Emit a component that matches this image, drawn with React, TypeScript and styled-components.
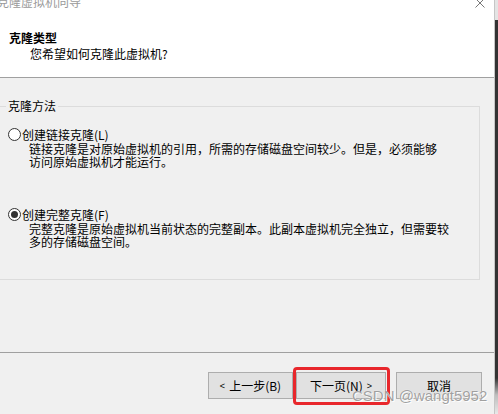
import React from "react";
import styled, { createGlobalStyle } from "styled-components";

const GlobalStyle = createGlobalStyle`
  html, body { margin: 0; padding: 0; background: #fff; }
  body {
    font-family: "Noto Sans CJK SC", "Liberation Sans", sans-serif;
    font-size: 12px;
    color: #000;
  }
`;

const Screen = styled.div`
  width: 498px;
  height: 414px;
  overflow: hidden;
  display: flex;
`;

const Dialog = styled.div`
  width: 494px;
  height: 414px;
  flex: none;
  display: flex;
  flex-direction: column;
  background: #f0f0f0;
`;

const EdgeStrip = styled.div`
  width: 4px;
  flex: none;
  box-sizing: border-box;
  border-left: 1px solid #c6c6c6;
  background: linear-gradient(
    to bottom,
    #e4e4e4 0px,
    #e4e4e4 20px,
    #333 20px,
    #333 378px,
    #bdbdbd 395px,
    #e8e8e8 414px
  );
`;

const Header = styled.div`
  height: 78px;
  box-sizing: border-box;
  background: #fff;
  border-bottom: 1px solid #a0a0a0;
  display: flex;
  flex-direction: column;
`;

const TitleBar = styled.div`
  height: 16px;
  margin: -6px 0 0 -3px;
  padding-right: 9px;
  display: flex;
  align-items: center;
  justify-content: space-between;
`;

const TitleText = styled.span`
  color: #9a9a9a;
  line-height: 16px;
`;

const Heading = styled.div`
  margin: 20px 0 0 9px;
  font-weight: bold;
  line-height: 16px;
`;

const SubHeading = styled.div`
  margin-left: 30px;
  line-height: 16px;
`;

const Body = styled.div`
  flex: 1;
  padding-top: 20px;
`;

const GroupBox = styled.fieldset`
  margin: 0 0 0 -3px;
  width: 483px;
  box-sizing: border-box;
  min-width: 0;
  padding: 12px 0 31px 0;
  border: 1px solid #dcdcdc;
`;

const Legend = styled.legend`
  margin-left: 8px;
  padding: 0 2px;
  line-height: 16px;
`;

const Option = styled.div<{ $gap?: number }>`
  display: flex;
  flex-direction: column;
  margin-top: ${(p) => p.$gap ?? 0}px;
`;

const OptionLabel = styled.label`
  display: flex;
  align-items: center;
  height: 16px;
  padding-left: 10px;
  gap: 1px;
  white-space: nowrap;
`;

const Radio = styled.span<{ $checked?: boolean }>`
  width: 13px;
  height: 13px;
  box-sizing: border-box;
  border-radius: 50%;
  border: 1px solid #333;
  background: #fff;
  display: flex;
  align-items: center;
  justify-content: center;
  &::after {
    content: "";
    width: 7px;
    height: 7px;
    border-radius: 50%;
    background: #333;
    display: ${(p) => (p.$checked ? "block" : "none")};
  }
`;

const Desc = styled.div`
  padding-left: 31px;
  line-height: 13px;
  white-space: nowrap;
`;

const Footer = styled.div`
  height: 62px;
  box-sizing: border-box;
  border-top: 1px solid #a0a0a0;
  position: relative;
  display: flex;
  align-items: flex-start;
  padding: 19px 0 0 208px;
`;

const Button = styled.button<{ $w: number; $ml?: number }>`
  width: ${(p) => p.$w}px;
  height: 27px;
  margin-left: ${(p) => p.$ml ?? 0}px;
  box-sizing: border-box;
  background: #e1e1e1;
  border: 1px solid #adadad;
  font-family: inherit;
  font-size: 12px;
  color: #000;
  padding: 0;
  display: flex;
  align-items: center;
  justify-content: center;
  gap: 4px;
  white-space: nowrap;
`;

const Chevron = styled.span`
  font-size: 9px;
  font-family: "Liberation Sans", sans-serif;
`;

const Highlight = styled.div`
  position: absolute;
  left: 293px;
  top: 14px;
  width: 97px;
  height: 38px;
  box-sizing: border-box;
  border: 3px solid #e8272c;
  border-radius: 4px;
  pointer-events: none;
`;

const Watermark = styled.div`
  position: absolute;
  left: 352px;
  top: 34px;
  font-family: "Liberation Sans", Arial, sans-serif;
  font-size: 15px;
  line-height: 18px;
  color: rgba(130, 130, 130, 0.75);
  text-shadow: 0 0 1px #fff, 1px 1px 0 rgba(255, 255, 255, 0.9);
  white-space: nowrap;
  pointer-events: none;
`;

const CloseIcon = () => (
  <svg width="10" height="10" viewBox="0 0 10 10" style={{ marginTop: 1 }}>
    <path d="M0.5 0.5 L9.5 9.5 M9.5 0.5 L0.5 9.5" stroke="#777" strokeWidth="1" fill="none" />
  </svg>
);

export default function App() {
  return (
    <>
      <GlobalStyle />
      <Screen>
        <Dialog>
          <Header>
            <TitleBar>
              <TitleText>克隆虚拟机向导</TitleText>
              <CloseIcon />
            </TitleBar>
            <Heading>克隆类型</Heading>
            <SubHeading>您希望如何克隆此虚拟机?</SubHeading>
          </Header>
          <Body>
            <GroupBox>
              <Legend>克隆方法</Legend>
              <Option>
                <OptionLabel>
                  <Radio />
                  创建链接克隆(L)
                </OptionLabel>
                <Desc>链接克隆是对原始虚拟机的引用，所需的存储磁盘空间较少。但是，必须能够</Desc>
                <Desc>访问原始虚拟机才能运行。</Desc>
              </Option>
              <Option $gap={38}>
                <OptionLabel>
                  <Radio $checked />
                  创建完整克隆(F)
                </OptionLabel>
                <Desc>完整克隆是原始虚拟机当前状态的完整副本。此副本虚拟机完全独立，但需要较</Desc>
                <Desc>多的存储磁盘空间。</Desc>
              </Option>
            </GroupBox>
          </Body>
          <Footer>
            <Button $w={85}>
              <Chevron>&lt;</Chevron>
              上一步(B)
            </Button>
            <Button $w={90} $ml={3}>
              下一页(N)
              <Chevron>&gt;</Chevron>
            </Button>
            <Button $w={86} $ml={10}>
              取消
            </Button>
            <Highlight />
            <Watermark>CSDN @wangt5952</Watermark>
          </Footer>
        </Dialog>
        <EdgeStrip />
      </Screen>
    </>
  );
}
